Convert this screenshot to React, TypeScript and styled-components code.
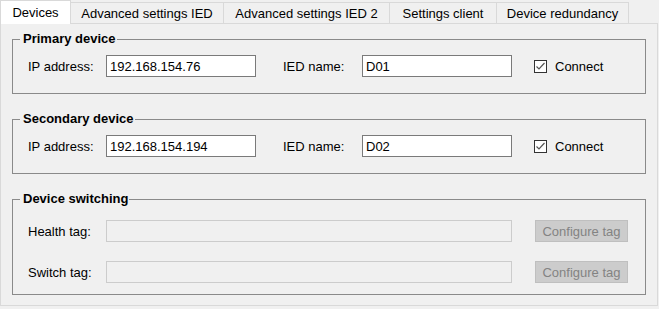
import React from "react";
import styled, { createGlobalStyle } from "styled-components";

const GlobalStyle = createGlobalStyle`
  html, body { margin: 0; padding: 0; background: #f0f0f0; }
  body {
    font-family: "Liberation Sans", Arial, sans-serif;
    font-size: 13px;
    color: #000;
  }
`;

const Window = styled.div`
  width: 659px;
  height: 309px;
  background: #f0f0f0;
  overflow: hidden;
`;

const TabStrip = styled.div`
  display: flex;
  align-items: flex-end;
  height: 23px;
  position: relative;
  z-index: 1;
`;

const Tab = styled.div<{ $w: number; $active?: boolean }>`
  box-sizing: border-box;
  width: ${(p) => p.$w}px;
  height: ${(p) => (p.$active ? 24 : 21)}px;
  margin-bottom: ${(p) => (p.$active ? -1 : 0)}px;
  background: ${(p) => (p.$active ? "#ffffff" : "#f0f0f0")};
  border-top: 1px solid #d9d9d9;
  border-right: 1px solid #d9d9d9;
  border-left: ${(p) => (p.$active ? "1px solid #d9d9d9" : "none")};
  display: flex;
  align-items: center;
  justify-content: center;
  font-size: 13px;
  line-height: 15px;
  white-space: nowrap;
`;

const Panel = styled.div`
  box-sizing: border-box;
  width: 658px;
  height: 283px;
  border: 1px solid #d9d9d9;
  display: flex;
  flex-direction: column;
  align-items: flex-start;
  gap: 17px;
  padding: 7px 11px 0 11px;
`;

const Group = styled.fieldset`
  box-sizing: border-box;
  width: 634px;
  margin: 0;
  padding: 0;
  min-width: 0;
  border: 1px solid #8a8a8a;
`;

const Legend = styled.legend`
  font-weight: bold;
  font-size: 13px;
  line-height: 16px;
  padding: 0 1px 0 3px;
  margin-left: 7px;
`;

const GroupBody = styled.div<{ $top: number; $bottom: number; $gap?: number }>`
  display: flex;
  flex-direction: column;
  gap: ${(p) => p.$gap ?? 0}px;
  padding: ${(p) => p.$top}px 0 ${(p) => p.$bottom}px 15px;
`;

const Row = styled.div`
  display: flex;
  align-items: center;
  height: 22px;
`;

const Label = styled.span<{ $w: number }>`
  width: ${(p) => p.$w}px;
  flex: none;
  font-size: 13px;
  white-space: nowrap;
`;

const TextBox = styled.div<{ $w: number; $disabled?: boolean }>`
  box-sizing: border-box;
  width: ${(p) => p.$w}px;
  height: 22px;
  flex: none;
  border: 1px solid ${(p) => (p.$disabled ? "#cccccc" : "#7a7a7a")};
  background: ${(p) => (p.$disabled ? "#f0f0f0" : "#ffffff")};
  padding: 0 3px;
  display: flex;
  align-items: center;
  font-size: 13px;
`;

const Spacer = styled.div<{ $w: number }>`
  width: ${(p) => p.$w}px;
  flex: none;
`;

const CheckLabel = styled.label`
  display: flex;
  align-items: center;
  gap: 8px;
  font-size: 13px;
`;

const CheckBox = styled.span`
  box-sizing: border-box;
  width: 13px;
  height: 13px;
  border: 1px solid #333333;
  background: #ffffff;
  display: flex;
  align-items: center;
  justify-content: center;
`;

const Button = styled.div`
  box-sizing: border-box;
  width: 93px;
  height: 22px;
  flex: none;
  background: #cccccc;
  border: 1px solid #bfbfbf;
  color: #838383;
  font-size: 13px;
  display: flex;
  align-items: center;
  justify-content: center;
  white-space: nowrap;
`;

const Check = () => (
  <CheckBox>
    <svg width="11" height="11" viewBox="0 0 11 11">
      <polyline
        points="1.5,5.5 4,8 9.5,2"
        fill="none"
        stroke="#555555"
        strokeWidth="1.2"
      />
    </svg>
  </CheckBox>
);

const DeviceRow = ({ ip, name }: { ip: string; name: string }) => (
  <Row>
    <Label $w={78}>IP address:</Label>
    <TextBox $w={150}>{ip}</TextBox>
    <Spacer $w={27} />
    <Label $w={79}>IED name:</Label>
    <TextBox $w={150}>{name}</TextBox>
    <Spacer $w={22} />
    <CheckLabel>
      <Check />
      Connect
    </CheckLabel>
  </Row>
);

const TagRow = ({ label }: { label: string }) => (
  <Row>
    <Label $w={78}>{label}</Label>
    <TextBox $w={406} $disabled />
    <Spacer $w={23} />
    <Button>Configure tag</Button>
  </Row>
);

const tabs = [
  { label: "Devices", w: 71, active: true },
  { label: "Advanced settings IED", w: 153 },
  { label: "Advanced settings IED 2", w: 166 },
  { label: "Settings client", w: 107 },
  { label: "Device redundancy", w: 132 },
];

export default function App() {
  return (
    <>
      <GlobalStyle />
      <Window>
        <TabStrip>
          {tabs.map((t) => (
            <Tab key={t.label} $w={t.w} $active={t.active}>
              {t.label}
            </Tab>
          ))}
        </TabStrip>
        <Panel>
          <Group>
            <Legend>Primary device</Legend>
            <GroupBody $top={8} $bottom={16}>
              <DeviceRow ip="192.168.154.76" name="D01" />
            </GroupBody>
          </Group>
          <Group>
            <Legend>Secondary device</Legend>
            <GroupBody $top={8} $bottom={16}>
              <DeviceRow ip="192.168.154.194" name="D02" />
            </GroupBody>
          </Group>
          <Group>
            <Legend>Device switching</Legend>
            <GroupBody $top={13} $bottom={11} $gap={19}>
              <TagRow label="Health tag:" />
              <TagRow label="Switch tag:" />
            </GroupBody>
          </Group>
        </Panel>
      </Window>
    </>
  );
}
